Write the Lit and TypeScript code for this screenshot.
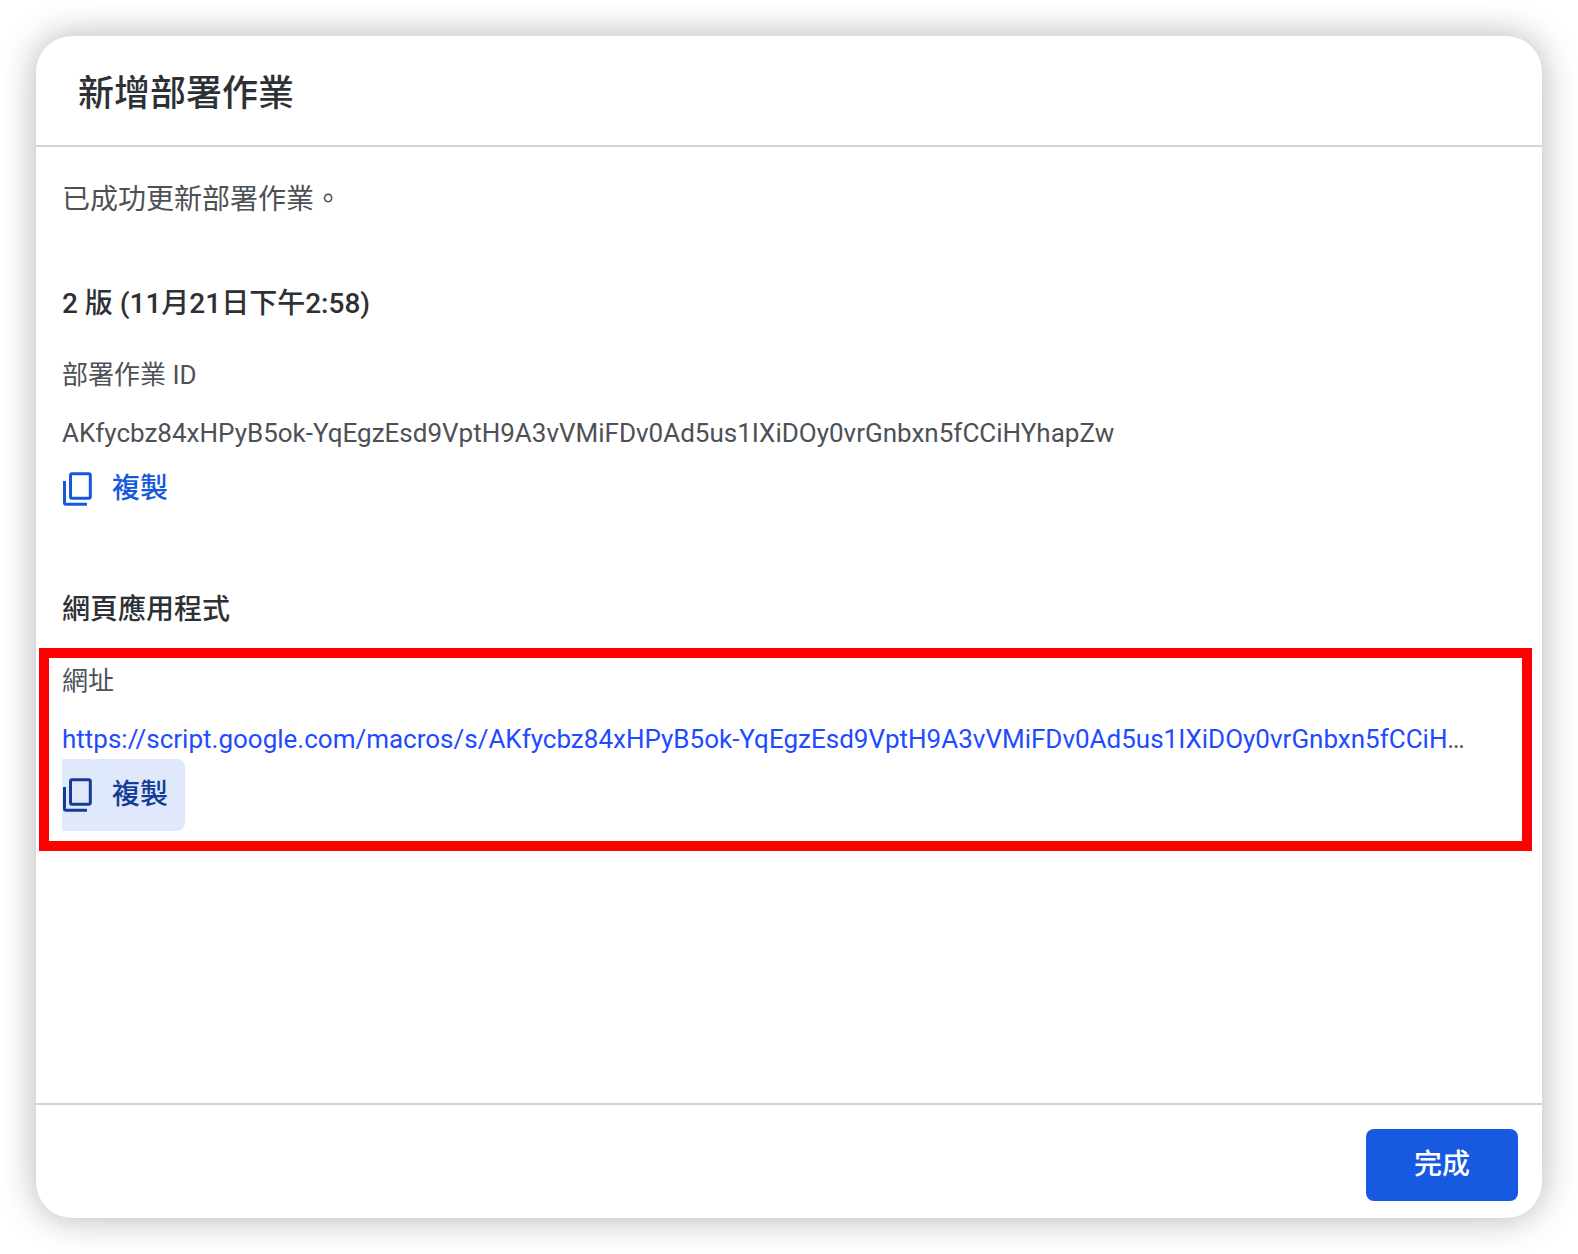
import { LitElement, html, css } from "lit";
import { customElement, property } from "lit/decorators.js";

const DEPLOYMENT_ID = "AKfycbz84xHPyB5ok-YqEgzEsd9VptH9A3vVMiFDv0Ad5us1IXiDOy0vrGnbxn5fCCiHYhapZw";
const APP_URL = `https://script.google.com/macros/s/${DEPLOYMENT_ID}/exec`;

@customElement("copy-button")
export class CopyButton extends LitElement {
  @property() value = "";
  @property({ type: Boolean, reflect: true }) highlighted = false;

  static styles = css`
    :host {
      display: block;
      --ink: #1558e0;
    }
    :host([highlighted]) {
      --ink: #143c96;
      --fill: #e0e8fc;
    }
    .copy {
      display: inline-flex;
      align-items: center;
      gap: 20px;
      height: 72px;
      padding: 0 17px 0 1px;
      border: 0;
      border-radius: 0 8px 8px 0;
      background: var(--fill, transparent);
      color: var(--ink);
      font: 500 28px/40px Roboto, "Noto Sans CJK TC", sans-serif;
      cursor: pointer;
      vertical-align: top;
    }
    .icon {
      display: block;
      width: 29px;
      height: 34px;
      fill: none;
      stroke: currentColor;
      stroke-width: 3;
    }
  `;

  render() {
    return html`<button class="copy" type="button" @click=${() => navigator.clipboard?.writeText(this.value)}>
      <svg class="icon" viewBox="0 0 29 34" aria-hidden="true">
        <rect x="7.5" y="1.7" width="19.8" height="24.6" rx="1.5" />
        <path d="M1.5 9V30.8Q1.5 32.3 3 32.3H24" />
      </svg>
      <span>複製</span>
    </button>`;
  }
}

@customElement("app-root")
export class AppRoot extends LitElement {
  static styles = css`
    :host {
      display: flex;
      box-sizing: border-box;
      min-height: 100vh;
      padding: 36px;
      background: #fff;
      color: #4d5156;
      font: 400 26px/40px Roboto, "Noto Sans CJK TC", sans-serif;
    }
    .dialog {
      display: flex;
      flex-direction: column;
      flex: 1;
      min-width: 0;
      border-radius: 36px;
      background: #fff;
      box-shadow: 0 0 36px rgba(0, 0, 0, 0.3);
    }
    .header {
      padding: 34px 42px 27px;
      border-bottom: 2px solid #cfd4d9;
    }
    .title {
      margin: 0;
      color: #2d3135;
      font-size: 36px;
      font-weight: 500;
      line-height: 48px;
    }
    .body {
      flex: 1;
      padding: 33px 26px;
    }
    .message {
      margin: 0 0 64px;
      font-size: 28px;
    }
    .group + .group {
      margin-top: 65px;
    }
    .heading {
      margin: 0 0 31px;
      color: #2d3135;
      font-size: 28px;
      font-weight: 500;
      line-height: 40px;
    }
    .label,
    .value {
      margin: 0;
    }
    .value {
      margin-top: 18px;
      margin-right: 42px;
      overflow: hidden;
      text-overflow: ellipsis;
      white-space: nowrap;
    }
    .link {
      color: #1f4bff;
      text-decoration: none;
    }
    .field {
      position: relative;
    }
    .marker {
      position: absolute;
      inset: -13px -16px -20px -23px;
      border: 10px solid #ff0000;
      pointer-events: none;
    }
    .footer {
      display: flex;
      justify-content: flex-end;
      padding: 24px 24px 17px;
      border-top: 2px solid #cfd4d9;
    }
    .done {
      height: 72px;
      padding: 0 48px;
      border: 0;
      border-radius: 8px;
      background: #1759e1;
      color: #fff;
      font: 500 28px/40px Roboto, "Noto Sans CJK TC", sans-serif;
      cursor: pointer;
    }
  `;

  render() {
    return html`
      <section class="dialog" role="dialog" aria-labelledby="title">
        <header class="header"><h1 class="title" id="title">新增部署作業</h1></header>
        <div class="body">
          <p class="message">已成功更新部署作業。</p>
          <section class="group">
            <h2 class="heading">2 版 (11月21日下午2:58)</h2>
            <div class="field">
              <p class="label">部署作業 ID</p>
              <p class="value">${DEPLOYMENT_ID}</p>
              <copy-button .value=${DEPLOYMENT_ID}></copy-button>
            </div>
          </section>
          <section class="group">
            <h2 class="heading">網頁應用程式</h2>
            <div class="field">
              <p class="label">網址</p>
              <p class="value"><a class="link" href=${APP_URL}>${APP_URL}</a></p>
              <copy-button .value=${APP_URL} highlighted></copy-button>
              <div class="marker"></div>
            </div>
          </section>
        </div>
        <footer class="footer"><button class="done" type="button">完成</button></footer>
      </section>
    `;
  }
}
